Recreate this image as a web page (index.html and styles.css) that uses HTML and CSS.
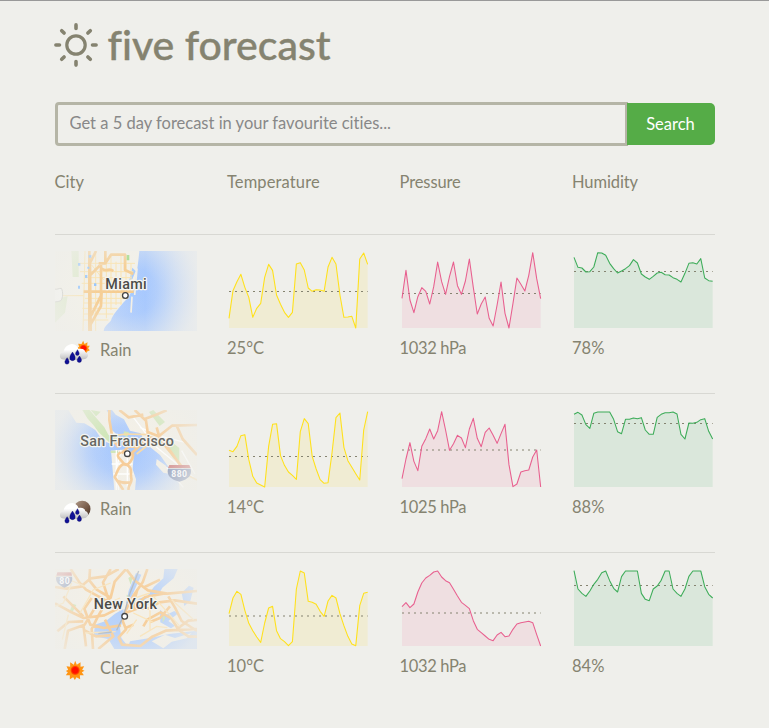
FILE: index.html
```html
<!DOCTYPE html>
<html lang="en">
<head>
<meta charset="utf-8">
<title>five forecast</title>
<link rel="stylesheet" href="styles.css">
</head>
<body>
<main class="container">
  <h1 class="brand">
    <svg class="brand-icon" viewBox="0 0 44 44" fill="none" stroke="currentColor" stroke-linecap="round">
      <circle cx="22" cy="22" r="9.2" stroke-width="3.2"/>
      <path stroke-width="3.6" d="M22 1.900v3.600M22 38.500v3.600M1.900 22h3.600M38.500 22h3.600M7.700 7.700l2.400 2.400M33.900 33.900l2.400 2.400M36.300 7.700l-2.400 2.400M10.100 33.900l-2.400 2.400"/>
    </svg>
    <span>five forecast</span>
  </h1>

  <form class="search">
    <input class="search-input" type="text" placeholder="Get a 5 day forecast in your favourite cities...">
    <button class="search-button" type="button">Search</button>
  </form>

  <div class="row head">
    <div class="h-city">City</div><div class="h-temp">Temperature</div><div class="h-pres">Pressure</div><div class="h-hum">Humidity</div>
  </div>

  <svg class="defs" width="0" height="0">
    <defs>
      <linearGradient id="sea1" gradientUnits="userSpaceOnUse" x1="160" y1="0" x2="441" y2="0"><stop offset="0" stop-color="#bcd4fb"/><stop offset=".45" stop-color="#a3c6ff"/><stop offset=".65" stop-color="#b3cffc"/><stop offset="1" stop-color="#dbe4f1"/></linearGradient>
      <radialGradient id="sea2" gradientUnits="userSpaceOnUse" cx="215" cy="150" r="210"><stop offset="0" stop-color="#a3c6ff"/><stop offset=".5" stop-color="#b2cefc"/><stop offset="1" stop-color="#dbe4f0"/></radialGradient>
      <radialGradient id="fade" gradientUnits="userSpaceOnUse" cx="228" cy="138" r="235" gradientTransform="translate(0 30) scale(1 .78)"><stop offset="0" stop-color="#eeeeea" stop-opacity="0"/><stop offset=".4" stop-color="#eeeeea" stop-opacity=".1"/><stop offset="1" stop-color="#eeeeea" stop-opacity=".75"/></radialGradient>
      <linearGradient id="cloud" x1="0" y1="0" x2="0" y2="1"><stop offset=".35" stop-color="#fff"/><stop offset="1" stop-color="#bdbdbd"/></linearGradient>
      <linearGradient id="moon" x1="0" y1="0" x2="1" y2="1"><stop offset="0" stop-color="#b29c8b"/><stop offset=".6" stop-color="#775b49"/><stop offset="1" stop-color="#40291c"/></linearGradient>
      <radialGradient id="sun"><stop offset=".6" stop-color="#ff1200"/><stop offset="1" stop-color="#ff6a00"/></radialGradient>
      <g id="rain">
        <path fill="url(#cloud)" d="M38 340c-10-3-9-22 4-22c2-16 20-29 34-22c7 3 10 9 11 13c13-3 20 3 20 9c10 2 12 15 2 20c-8 4-60 6-71 2z"/>
        <path fill="#101095" stroke="#05055d" stroke-width="1" d="M69 318c5 7 8 12 8 18a8 8 0 0 1-16 0c0-6 3-11 8-18zM84 311c3 5 5 8 5 12a5.500 5.500 0 0 1-11 0c0-4 3-7 6-12zM53 335c4 6 6 9 6 13a6.500 6.500 0 0 1-13 0c0-4 3-7 7-13zM90 330c4 6 6 9 6 13a6.500 6.500 0 0 1-13 0c0-4 3-7 7-13z"/>
      </g>
    </defs>
  </svg>

  <section class="row city-row">
    <div>
      <svg class="map" viewBox="15 18 426 240">
        <path fill="#f3f1e9" d="M15 18h426v240H15z"/>
        <path fill="#deeacb" d="M64 18h22v78H68zM15 165l38-12-8 50-30 30z"/>
        <path fill="url(#sea1)" d="M268 18H441V258H161c2-20 22-22 24-38c8-18 22-30 34-46c8-12 28-18 32-40c4-20 12-60 17-116z"/>
        <path fill="#a6cbff" d="M247 68l10 10-10 25-9 2zM234 160l10-20 10 8-12 24z"/>
        <path fill="none" stroke="#f5f0e5" stroke-width="5" d="M261 70l-7 80M246 155l-3 48"/>
        <g fill="none" stroke="#fbe3ad" stroke-width="3">
          <path d="M15 152h85M105 18l-6 240M137 18v240M169 40v180M183 30v165M198 50v130M213 30v150M228 28v130M243 55v75M85 55h170M90 80h160M105 98h140M95 115h155M105 160h130M100 174h115M97 190h105M100 207h90M100 225h75M125 60l36 45"/>
        </g>
        <g fill="none" stroke="#f6cc8f" stroke-width="8" stroke-linejoin="round">
          <path d="M101 140h150M118 18v240M138 18l-18 36 2 204M153 60v92l-30 60M155 138l-2 45-35 62M146 55h20l17-26h42v46l25 12M155 70c15 15 20-5 35 8M166 18v35M121 90l28-28"/>
        </g>
        <g fill="#8fc2ff"><path d="M84 54h7v8h-7zM116 30h8v8h-8zM105 90h7v9h-7zM132 115h7v8h-7zM84 122h6v9h-6zM112 65h6v6h-6z"/></g>
        <path fill="#9bda82" d="M230 30h8v16h-8zM192 118h7v8h-7z"/>
        <path fill="#f5f5f2" stroke="#c5c5c0" stroke-width="3" d="M12 132c10 3 15-3 22-2c6 10 5 30-2 37c-8 4-13 2-20 5z"/>
        <path fill="url(#fade)" d="M13 17h429v242H13z"/>
        <circle cx="226" cy="151.500" r="8.500" fill="#fff" stroke="#444" stroke-width="4"/>
        <text class="map-label" x="166" y="133" textLength="124">Miami</text>
      </svg>
      <div class="weather">
        <svg class="weather-icon" viewBox="25.500 276 99 84">
          <path fill="#ff9a19" d="M101 284l4 10 9-5-1 10 8 0-5 8 5 6-9 4 1 9-9-3-6 5-5-8-9 1 2-9-4-6 7-4-3-9 10 1z"/>
          <circle cx="102" cy="307" r="11" fill="url(#sun)"/><use href="#rain"/>
        </svg><span class="rain-text">Rain</span>
      </div>
    </div>
    <div><svg class="chart temp" data-chart="t1"></svg><p class="t-text">25°C</p></div>
    <div><svg class="chart pres" data-chart="p1"></svg><p class="p-text">1032 hPa</p></div>
    <div><svg class="chart hum" data-chart="h1"></svg><p class="h-text">78%</p></div>
  </section>

  <section class="row city-row">
    <div>
      <svg class="map" viewBox="15 18 426 240">
        <path fill="url(#sea2)" d="M15 18h426v240H15z"/>
        <path fill="#f3f0e7" d="M55 18h115l12 24-3 30 22 20 4 18-15 12-32-12-22-32-15-10-18-10-24-2zM186 18h255v240h-52l-3-35-28-30-28-40-44-35-14-30-32-8-18-34-25-14zM183 140l52-4 16 20-3 40 10 30-3 32h-62zM320 165l28 20 12 25-20-4-22-24z"/>
        <path fill="#cfe6b6" d="M97 18h22l18 22 26 30 12 22 28 10-5 15-22-4-30-28-16-22-18-20zM122 18l30 5-14 14zM310 18l35 36-16 12-32-42zM360 110l28 22v45l-18-14-20-28zM222 82l15 3-5 14-12-5zM182 140h22v7h-22z"/>
        <g fill="none" stroke="#fff" stroke-width="4"><path d="M199 138v120M213 138l-15 60 8 60M185 180h62M190 210h60M232 140v110M250 40l70 90 110 90M270 70l55 25 80 20M395 140l40 70M350 190l50 60"/></g>
        <g fill="none" stroke="#f7cb94" stroke-width="8" stroke-linejoin="round">
          <path d="M178 18v30l4 22 5 32 18 28M208 18l28 22 44-8M254 18l34 32 7 48 37 12 34 40 28 36M296 85l30 12 40-32 75-2M284 45l32-12 34-14M300 98l-22 18-44 42M215 148l20-20 26 0M212 145c-20 10 2 22 10 34s30-12 27-30M222 179c-22 10-20 30-28 40l26 39M222 179c30 8 18 30 22 44s-12 20-8 35M205 232c14 6 20 5 40 3M332 100l60 85M320 70l10 36M380 65l18 40 43 48"/>
        </g>
        <path fill="none" stroke="#f8d9a5" stroke-width="5" d="M190 95l40-5 65 2M260 150l30-24M385 225l20-15 36 18"/>
        <path fill="#7e8eb4" d="M354 194h68c5 20-8 32-34 39c-26-7-39-19-34-39z"/><path fill="#cd7777" d="M358 183h60l4 9h-68z"/>
        <path fill="url(#fade)" d="M13 17h429v242H13z"/>
        <text class="shield-text" x="364" y="218" textLength="47">880</text>
        <circle cx="232" cy="149" r="8.500" fill="#fff" stroke="#444" stroke-width="4"/>
        <text class="map-label soft" x="91" y="127" textLength="281">San Francisco</text>
      </svg>
      <div class="weather">
        <svg class="weather-icon" viewBox="25.500 276 99 84"><circle cx="98" cy="312" r="25" fill="url(#moon)"/><use href="#rain"/></svg><span class="rain-text">Rain</span>
      </div>
    </div>
    <div><svg class="chart temp" data-chart="t2"></svg><p class="t-text">14°C</p></div>
    <div><svg class="chart pres" data-chart="p2"></svg><p class="p-text">1025 hPa</p></div>
    <div><svg class="chart hum" data-chart="h2"></svg><p class="h-text">88%</p></div>
  </section>

  <section class="row city-row">
    <div>
      <svg class="map" viewBox="15 18 426 240">
        <path fill="#f3f0e7" d="M15 18h426v240H15z"/>
        <path fill="#b6d1fb" d="M343 18h40l-12 28-34 28-12 22-30 6-15 12-18-5 30-10 20-28 28-25zM258 30l16 5-32 72-14 16 8-40zM195 152l25-14 4 22-14 35 4 30 22 28-5 5h-38l-18-30-44-8 4-35 34-12zM330 140l18 16 25-12 10 8-28 22 20 14-12 8-32-18zM240 235l60-10 58-12 83-10v55H232zM395 90l22-22 14 6-10 40-18 15z"/>
        <path fill="#f3f0e7" d="M305 235l40-20 30 10 50-15-15 16-45 10-25 20z"/>
        <path fill="#cfe6b6" d="M68 122l11 4-13 24-8-3zM235 45l15-10-8 30zM338 155l8 10-8 14zM230 95l7 5-6 12z"/>
        <g fill="none" stroke="#f7cd97" stroke-width="8" stroke-linejoin="round">
          <path d="M15 72l35 5 42-6 30-25 44-6 40-22M62 18l26 40 20 22 55 30 48 30M15 121l48 26 38 18 62-8 48-24M120 18l-2 34 22 28 38 22M182 18l-23 40 16 50-30 50-20 40 4 60M228 18l-34 38-12 48-50 35-28 46-50 18-10 55M125 105l-22 32 18 48 40 10 52-8M40 100l60 60M22 205l34-28 44-2M100 200l38 20 42-3M100 185l8 65M165 170l25 50-45 38"/>
          <path d="M292 18l-14 40-28 40-24 46-8 30 10 25-22 24 10 22 55 4 36-28 40-18 94-5M230 20l26 34 38 28 58 10 89-8M226 150l38-14 34 0 30-18 46-6 67 10M250 130l36-28 54-10M262 80l-16 58 48-18 28 0M280 190l12-20 40-22 32 18 22 35 30 20 25 0M330 50l-46 22M360 130l-30 35-30 12M355 100l20 34 20 40 46 30M226 195l24-10M385 195l30-22 26-2"/>
        </g>
        <g fill="none" stroke="#fae3b7" stroke-width="4"><path d="M15 40l55 15 35 15M65 60l-25 60-25 10M130 140l80-35M90 150l40-70 52-20M55 155l-18 75M105 210l92-4M240 110l60-20M250 150l60 28M270 220l50-30 32 4M300 130v70M260 170l-30 42M365 110l66 60M310 100l80 90"/></g>
        <path fill="none" stroke="#b0b9c2" stroke-width="4" d="M266 24l-26 66-20 70-20 42M145 212l40-5"/>
        <path fill="#8998bb" d="M19 41h47c4 15-7 26-23 33c-17-8-28-18-24-33z"/><path fill="#d28080" d="M22 28h42l2 10H19z"/>
        <path fill="url(#fade)" d="M13 17h429v242H13z"/>
        <text class="shield-text" x="28" y="62" textLength="31">80</text>
        <circle cx="224" cy="160" r="8.500" fill="#fff" stroke="#444" stroke-width="4"/>
        <text class="map-label" x="131" y="138" textLength="190">New York</text>
      </svg>
      <div class="weather">
        <svg class="weather-icon" viewBox="25.500 276 99 84">
          <path fill="#ff9412" d="M77 290l5 12 11-7 0 13 11-1-6 10 7 3-8 5 6 9-12 0 1 12-11-6-5 8-5-8-10 6 0-12-12 0 6-9-6-4 7-4-5-10 11 1 0-13 11 7z"/><circle cx="77" cy="319" r="14" fill="url(#sun)"/>
        </svg><span class="clear-text">Clear</span>
      </div>
    </div>
    <div><svg class="chart temp" data-chart="t3"></svg><p class="t-text">10°C</p></div>
    <div><svg class="chart pres" data-chart="p3"></svg><p class="p-text">1032 hPa</p></div>
    <div><svg class="chart hum" data-chart="h3"></svg><p class="h-text">84%</p></div>
  </section>
</main>
<script src="script.js"></script>
</body>
</html>
```
FILE: styles.css
```css
* { box-sizing: border-box; }
body {
  margin: 0;
  border-top: 1px solid #999;
  background: #efefeb;
  color: #858370;
  font-family: Lato, "Liberation Sans", sans-serif;
  font-size: 16.5px;
  line-height: 20px;
  font-variant-ligatures: none;
}
.container { width: 660px; margin: 0 auto; }
.brand {
  display: flex;
  align-items: center;
  height: 101px;
  margin: 0;
  padding-bottom: 13px;
  font-size: 41px;
  font-weight: 500;
  line-height: 50px;
  white-space: nowrap;
  -webkit-text-stroke: 0.4px currentColor;
}
.brand-icon { width: 44px; height: 44px; margin: 0 10px 0 -1px; }
.search { display: flex; align-items: center; height: 44px; }
.search-input {
  width: 573px;
  height: 44px;
  padding: 0 12px 2px;
  border: 3px solid #b5b5a6;
  border-radius: 4px 0 0 4px;
  background: transparent;
  color: #858585;
  font: inherit;
}
.search-input::placeholder { color: #888; opacity: 1; }
.search-button {
  width: 88px;
  height: 42px;
  margin-left: -1px;
  padding: 0 0 1px;
  border: 0;
  border-radius: 0 5px 5px 0;
  background: #55ac47;
  color: #fff;
  font: inherit;
}
.row { display: grid; grid-template-columns: repeat(4, 142.5px); column-gap: 30px; }
.head { height: 88px; padding-top: 26px; }
.h-temp { letter-spacing: 0.12px; }
.h-pres { letter-spacing: -0.1px; }
.h-hum { letter-spacing: -0.1px; }
.defs { display: block; }
.city-row { height: 159px; padding-top: 16px; border-top: 1px solid #d8d8d3; }
.chart { display: block; width: 142.5px; height: 80px; }
.map { display: block; width: 142px; height: 80px; }
.map-label { font: 500 43px Roboto, sans-serif; fill: #4b4b48; stroke: #f5f5f1; stroke-width: 7px; stroke-linejoin: round; paint-order: stroke; }
.soft { fill: #676763; }
.shield-text { font: 700 26px Roboto, sans-serif; fill: #f7f7f7; }
.weather { display: flex; height: 40px; padding-left: 3px; }
.weather-icon { width: 33px; height: 28px; margin: 7px 9.5px 0 0; }
.weather span { padding-top: 9px; }
.clear-text { letter-spacing: 0.15px; }
.city-row p { margin: 7px 0 0; }
.p-text { letter-spacing: -0.35px; }
.chart path { stroke: none; opacity: .1; }
.pres path { opacity: .08; }
.chart polyline { fill: none; stroke-width: 3.2; stroke-linejoin: round; }
.chart line { stroke: #858370; stroke-width: 3; stroke-dasharray: 6 12; }
.temp { fill: #ffda00; stroke: #ffe11a; }
.pres { fill: #f2266f; stroke: #e8608f; }
.hum { fill: #29a94a; stroke: #3dac59; }
```
FILE: script.js
```js
// Each series holds vertical positions in a 427.5 x 240 drawing, shifted by `top`.
const charts = {
  t1: { x: 6, top: 18, mean: 139.5, y: [220,137,110,88,127,157,217,190,175,97,58,76,150,178,202,217,202,57,53,75,129,139,134,135,139,66,37,57,150,217,216,214,249,42,24,58] },
  t2: { x: 6, top: 18, mean: 157.5, y: [139,143,127,95,92,167,217,237,243,249,127,61,59,155,184,204,214,226,83,44,59,157,195,227,238,236,147,41,27,130,170,190,209,228,78,23] },
  t3: { x: 6, top: 18, mean: 159, y: [152,105,85,94,142,181,203,222,238,180,135,130,203,227,236,248,236,78,24,30,115,118,124,145,160,114,97,105,152,188,220,243,248,128,91,88] },
  p1: { x: 6, top: 18, mean: 145.5, y: [160,76,165,203,155,128,139,177,125,51,110,148,94,51,122,148,108,42,127,207,177,156,220,243,180,111,205,249,176,99,118,138,91,23,101,161] },
  p2: { x: 6, top: 18, mean: 138, y: [224,165,116,172,200,127,104,75,105,80,23,78,139,119,94,102,131,75,43,103,128,85,72,94,118,89,61,182,248,240,204,200,198,159,138,249] },
  p3: { x: 6, top: 18, mean: 150, y: [131,119,134,123,87,60,45,37,27,24,42,53,59,79,99,118,127,137,173,199,209,219,229,233,216,208,221,219,199,183,179,177,175,179,215,249] },
  h1: { x: 6, top: 18, mean: 79.5, y: [37,67,69,81,80,66,23,24,31,55,71,84,78,71,62,44,54,87,96,103,94,84,82,89,90,98,103,111,85,55,53,57,41,99,107,109] },
  h2: { x: 6, top: 30, mean: 70.5, y: [43,37,45,74,85,40,36,36,36,36,58,95,101,58,58,54,56,53,90,103,103,52,43,38,38,36,42,103,117,69,70,67,59,56,94,117] },
  h3: { x: 6, top: 507, mean: 556.5, y: [512,567,580,589,573,553,538,518,513,542,565,576,530,513,513,513,513,580,598,602,567,558,541,513,513,567,580,589,567,529,513,513,513,560,583,594] }
};
const STEP = 416 / 35;
for (const svg of document.querySelectorAll("[data-chart]")) {
  const c = charts[svg.dataset.chart];
  const pts = c.y.map((y, i) => `${(c.x + i * STEP).toFixed(1)},${y - c.top}`);
  svg.setAttribute("viewBox", "0 0 427.5 240");
  svg.innerHTML = `<path d="M${c.x},231L${pts.join("L")}L${c.x + 416},231Z"/>` +
    `<line x1="${c.x}" x2="${c.x + 416}" y1="${c.mean - c.top}" y2="${c.mean - c.top}"/>` +
    `<polyline points="${pts.join(" ")}"/>`;
}
```
